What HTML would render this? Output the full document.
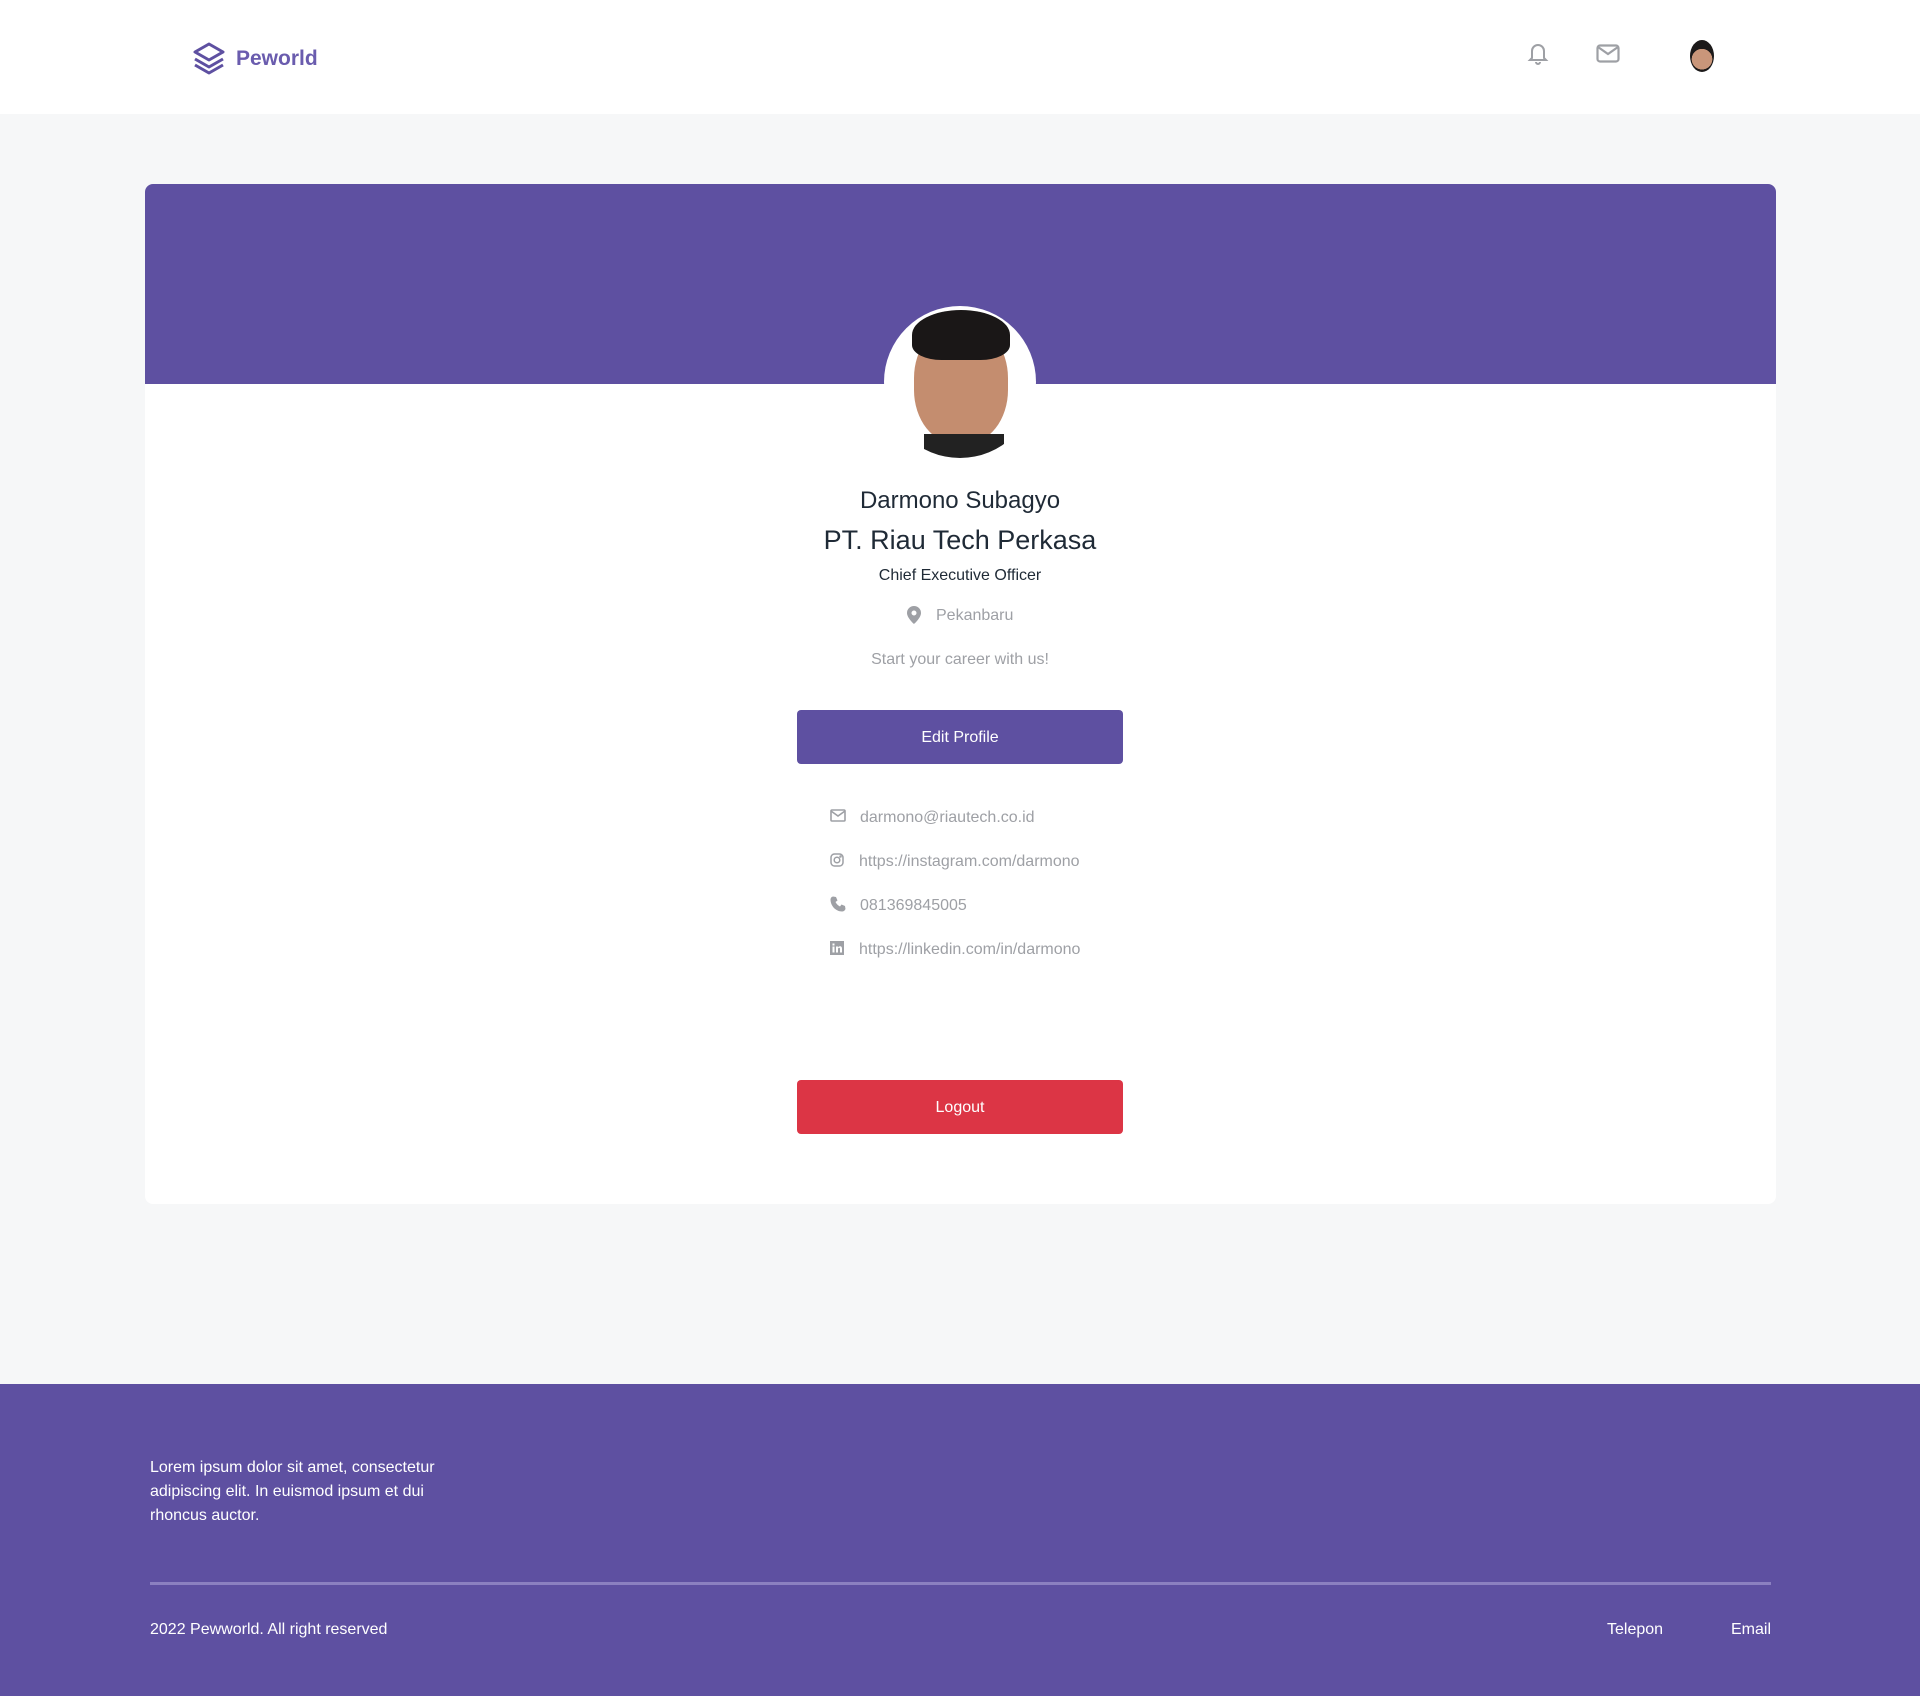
<!DOCTYPE html>
<html><head><meta charset="utf-8"><style>
*{margin:0;padding:0;box-sizing:border-box}
body{width:1920px;height:1696px;background:#F6F7F8;font-family:"Liberation Sans",sans-serif;position:relative;overflow:hidden}
.nav{position:absolute;left:0;top:0;width:1920px;height:114px;background:#fff}
.abs{position:absolute}
.card{position:absolute;left:145px;top:184px;width:1631px;height:1020px;background:#fff;border-radius:8px;overflow:hidden}
.banner{position:absolute;left:0;top:0;width:100%;height:200px;background:#5E50A1}
.c{position:absolute;left:0;width:1920px;text-align:center}
.btn{position:absolute;left:797px;width:326px;height:54px;border-radius:4px;color:#fff;font-size:16px;text-align:center;line-height:56px}
.ct{position:absolute;left:860px;font-size:16px;color:#9EA0A5}
.ic{position:absolute;left:830px}
footer{position:absolute;left:0;top:1384px;width:1920px;height:312px;background:#5E50A1;color:#fff;font-size:16px}
</style></head><body>
<div class="nav">
<svg class="abs" style="left:192px;top:41px" width="34" height="34" viewBox="0 0 34 34" fill="none" stroke="#5E50A1" stroke-width="3" stroke-linejoin="round"><path d="M17 3L31 11L17 19L3 11Z"/><path d="M3 18L17 26L31 18"/><path d="M3 24L17 32L31 24"/></svg>
<div class="abs" style="left:236px;top:47px;font-size:21px;font-weight:bold;color:#6A5CAE">Peworld</div>
<svg class="abs" style="left:1527px;top:41px" width="22" height="24" viewBox="0 0 22 24" fill="none" stroke="#9EA0A5" stroke-width="2"><path d="M5 17V10a6 6 0 0 1 12 0v7l2 2H3z"/><path d="M9 21a2 2 0 0 0 4 0"/></svg>
<svg class="abs" style="left:1596px;top:44px" width="24" height="20" viewBox="0 0 24 20" fill="none" stroke="#9EA0A5" stroke-width="2.2"><rect x="1.5" y="1.5" width="21" height="16" rx="2.5"/><path d="M2 3l10 7 10-7"/></svg>
<div class="abs" style="left:1690px;top:40px;width:24px;height:32px;border-radius:50%;background:radial-gradient(circle at 50% 60%,#c9967a 0 45%,#1c1a1a 46%)"></div>
</div>
<div class="card"><div class="banner"></div></div>
<div class="abs" style="left:884px;top:306px;width:152px;height:152px;border-radius:50%;background:#fff;overflow:hidden">
<div class="abs" style="left:30px;top:18px;width:94px;height:120px;border-radius:45%;background:#c48d6f"></div>
<div class="abs" style="left:28px;top:4px;width:98px;height:50px;border-radius:50% 50% 30% 30%;background:#1a1717"></div>
<div class="abs" style="left:40px;top:128px;width:80px;height:40px;background:#222"></div>
</div>
<div class="c" style="top:487px;font-size:24px;color:#1F2A36">Darmono Subagyo</div>
<div class="c" style="top:525px;font-size:27px;color:#1F2A36">PT. Riau Tech Perkasa</div>
<div class="c" style="top:567px;font-size:16px;color:#1F2A36">Chief Executive Officer</div>
<svg class="abs" style="left:907px;top:606px" width="14" height="18" viewBox="0 0 14 18"><path d="M7 0a7 7 0 0 0-7 7c0 5 7 11 7 11s7-6 7-11a7 7 0 0 0-7-7zm0 9.5a2.5 2.5 0 1 1 0-5 2.5 2.5 0 0 1 0 5z" fill="#9EA0A5"/></svg>
<div class="abs" style="left:936px;top:607px;font-size:16px;color:#9EA0A5">Pekanbaru</div>
<div class="c" style="top:651px;font-size:16px;color:#9EA0A5">Start your career with us!</div>
<div class="btn" style="top:710px;background:#5E50A1">Edit Profile</div>
<svg class="ic" style="top:809px" width="16" height="13" viewBox="0 0 16 13" fill="none" stroke="#9EA0A5" stroke-width="1.6"><rect x="1" y="1" width="14" height="11" rx="1"/><path d="M1 2l7 5 7-5"/></svg>
<div class="ct" style="top:809px">darmono@riautech.co.id</div>
<svg class="ic" style="top:853px" width="14" height="14" viewBox="0 0 14 14" fill="none" stroke="#9EA0A5" stroke-width="1.5"><rect x="1" y="1" width="12" height="12" rx="3.5"/><circle cx="7" cy="7" r="2.8"/><circle cx="10.5" cy="3.5" r=".5" fill="#9EA0A5"/></svg>
<div class="ct" style="top:853px;left:859px">https://instagram.com/darmono</div>
<svg class="ic" style="top:896px" width="16" height="16" viewBox="0 0 16 16"><path d="M3 0.5l3 .5 1.5 3.5-2 1.5c1 2 2.5 3.5 4.5 4.5l1.5-2 3.5 1.5.5 3c-.5 1.5-2 2.5-3.5 2.5C6 15.5.5 10 .5 3.5 .5 2 1.5 .8 3 .5z" fill="#9EA0A5"/></svg>
<div class="ct" style="top:897px">081369845005</div>
<svg class="ic" style="top:941px" width="14" height="14" viewBox="0 0 14 14"><rect width="14" height="14" fill="#9EA0A5"/><rect x="2.5" y="5.5" width="2" height="6" fill="#fff"/><rect x="2.5" y="2.5" width="2" height="2" fill="#fff"/><path d="M6 5.5h2v1c.5-.8 1.2-1.2 2-1.2 1.5 0 2 1 2 2.5v3.7h-2V8c0-.8-.3-1.2-.9-1.2S8 7.3 8 8v3.5H6z" fill="#fff"/></svg>
<div class="ct" style="top:941px;left:859px">https://linkedin.com/in/darmono</div>
<div class="btn" style="top:1080px;background:#DC3545">Logout</div>
<footer>
<div class="abs" style="left:150px;top:72px;width:310px;line-height:24px">Lorem ipsum dolor sit amet, consectetur adipiscing elit. In euismod ipsum et dui rhoncus auctor.</div>
<div class="abs" style="left:150px;top:198px;width:1621px;height:3px;background:#8B80C0"></div>
<div class="abs" style="left:150px;top:237px">2022 Pewworld. All right reserved</div>
<div class="abs" style="left:1607px;top:237px">Telepon</div>
<div class="abs" style="left:1731px;top:237px">Email</div>
</footer>
</body></html>
